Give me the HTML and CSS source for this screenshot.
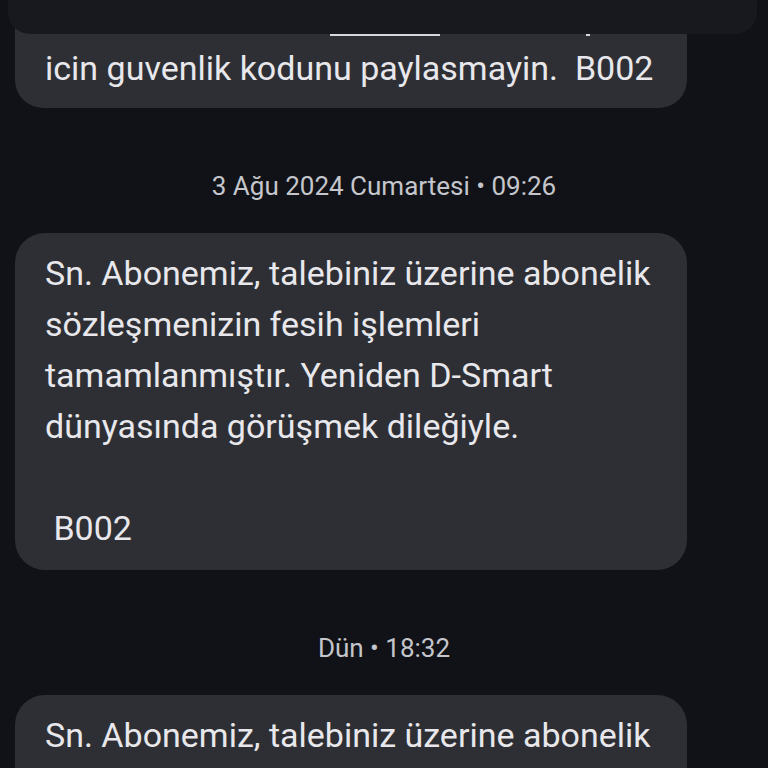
FILE: index.html
```html
<!DOCTYPE html>
<html lang="tr">
<head>
<meta charset="utf-8">
<link rel="stylesheet" href="styles.css">
</head>
<body>
<div class="thread">
  <div class="bubble first">
    <div class="text">icin guvenlik kodunu paylasmayin.  B002</div>
    <span class="peek peek-a"></span>
    <span class="peek peek-b"></span>
  </div>
  <div class="stamp">3 Ağu 2024 Cumartesi • 09:26</div>
  <div class="bubble">
    <div class="text">Sn. Abonemiz, talebiniz üzerine abonelik
sözleşmenizin fesih işlemleri
tamamlanmıştır. Yeniden D-Smart
dünyasında görüşmek dileğiyle.

 B002</div>
  </div>
  <div class="stamp">Dün • 18:32</div>
  <div class="bubble last">
    <div class="text">Sn. Abonemiz, talebiniz üzerine abonelik</div>
  </div>
  <div class="topbar"></div>
</div>
</body>
</html>
```

FILE: styles.css
```css
html, body {
  margin: 0;
  padding: 0;
  background: #111217;
  height: 768px;
  overflow: hidden;
}
.thread {
  position: relative;
  display: flex;
  flex-direction: column;
  align-items: flex-start;
  padding-left: 15px;
  font-family: Roboto, "Noto Sans", sans-serif;
}
.bubble {
  position: relative;
  width: 672px;
  box-sizing: border-box;
  background: #2e2f34;
  border-radius: 30px;
  padding: 15px 30px 16px 30px;
  color: #e8e8ec;
}
.bubble.first {
  margin-top: -23px;
  padding-top: 66px;
  padding-bottom: 14px;
  border-radius: 28px;
}
.bubble.last {
  padding-bottom: 40px;
}
.text {
  font-size: 34px;
  line-height: 51px;
  white-space: pre;
}
.stamp {
  align-self: stretch;
  margin-right: 15px;
  text-align: center;
  font-size: 26px;
  line-height: 32px;
  color: #c4c6cc;
  margin-top: 62px;
  margin-bottom: 31px;
}
.topbar {
  position: absolute;
  left: 8px;
  top: -40px;
  width: 749px;
  height: 74px;
  background: #18191e;
  border-radius: 0 0 22px 22px;
}
.peek {
  position: absolute;
  height: 2px;
  background: #d8d8dc;
  z-index: 2;
}
.peek-a {
  left: 315px;
  top: 57px;
  width: 110px;
}
.peek-b {
  left: 571px;
  top: 57px;
  width: 4px;
}
```
